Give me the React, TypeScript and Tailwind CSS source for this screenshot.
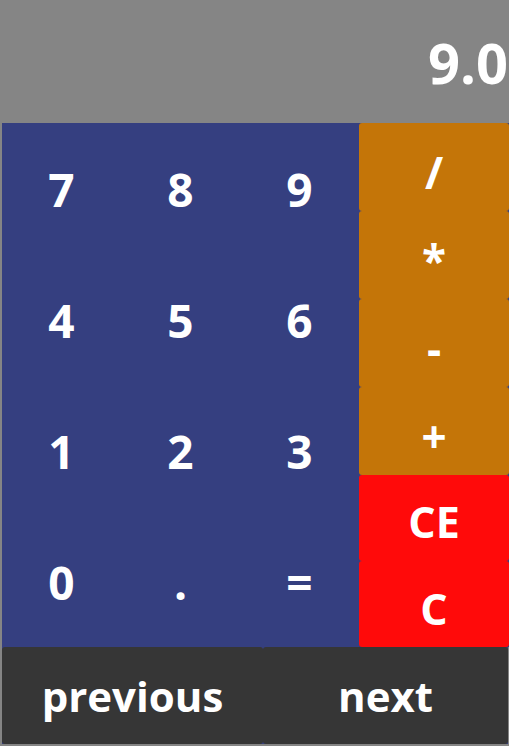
import React from "react";

const digits = ["7", "8", "9", "4", "5", "6", "1", "2", "3", "0", ".", "="];
const ops = ["/", "*", "-", "+"];

const App = () => {
  return (
    <div className="w-[509px] h-[746px] bg-[#858585] flex flex-col font-['Open_Sans',sans-serif] font-bold text-white overflow-hidden">
      <div className="h-[123px] flex items-center justify-end overflow-hidden">
        <span className="text-[56px] leading-none mr-[1px]">9.0</span>
      </div>
      <div className="ml-[2px] h-[524px] flex bg-[#353f80]">
        <div className="w-[357px] grid grid-cols-3 grid-rows-4">
          {digits.map((d) => (
            <button key={d} className="flex items-center justify-center text-[46px] leading-none">
              {d}
            </button>
          ))}
        </div>
        <div className="flex-1 flex flex-col">
          {ops.map((o) => (
            <button
              key={o}
              className="h-[88px] pt-[10px] rounded-[3px] bg-[#c47508] flex items-center justify-center text-[44px] leading-none"
            >
              {o}
            </button>
          ))}
          <button className="h-[86px] pt-[7px] rounded-[3px] bg-[#ff0a0a] flex items-center justify-center text-[43px] leading-none">
            CE
          </button>
          <button className="h-[86px] pt-[9px] rounded-[3px] bg-[#ff0a0a] flex items-center justify-center text-[43px] leading-none">
            C
          </button>
        </div>
      </div>
      <div className="ml-[2px] mr-[1px] h-[97px] flex bg-[#353f80]">
        <button className="w-[261px] rounded-[3px] bg-[#363636] flex items-center justify-center text-[42px] leading-none">
          previous
        </button>
        <button className="flex-1 rounded-[3px] bg-[#363636] flex items-center justify-center text-[42px] leading-none">
          next
        </button>
      </div>
    </div>
  );
};

export default App;
